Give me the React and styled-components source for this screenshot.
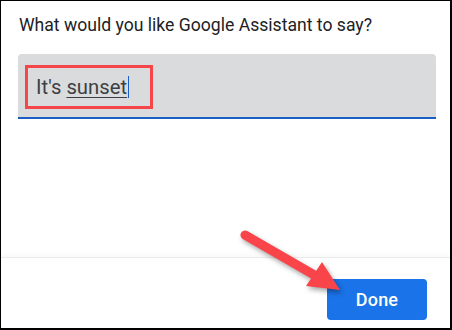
import React from "react";
import styled, { createGlobalStyle } from "styled-components";

const Global = createGlobalStyle`
  html, body { margin: 0; padding: 0; background: #ffffff; }
  body { font-family: Roboto, "Liberation Sans", Arial, sans-serif; }
`;

const Frame = styled.div`
  position: relative;
  box-sizing: border-box;
  width: 452px;
  height: 330px;
  border-style: solid;
  border-color: #000;
  border-width: 1px 2px 2px 1px;
  background: #fff;
  display: flex;
  flex-direction: column;
  overflow: hidden;
`;

const Body = styled.div`
  flex: 1;
  display: flex;
  flex-direction: column;
  padding: 12px 14px 0 17px;
`;

const Prompt = styled.div`
  font-size: 17.6px;
  line-height: 24px;
  color: #202124;
  margin-left: 1px;
  white-space: nowrap;
`;

const Field = styled.div`
  margin-top: 17px;
  background: #dadbdd;
  border-radius: 4px 4px 0 0;
  border-bottom: 2px solid #1a5fc8;
  display: flex;
  align-items: flex-start;
  padding: 11px 0 0 7px;
  box-sizing: content-box;
  height: 52px;
`;

const Highlight = styled.div`
  box-sizing: border-box;
  width: 128px;
  height: 44px;
  border: 3px solid #f64649;
  padding: 7px 0 0 8px;
`;

const Value = styled.span`
  font-size: 20.3px;
  line-height: 24px;
  color: #3c4043;
  white-space: nowrap;
`;

const Word = styled.span`
  text-decoration: underline;
  text-decoration-thickness: 1px;
  text-underline-offset: 3px;
  text-decoration-color: #3c4043;
`;

const Caret = styled.span`
  display: inline-block;
  width: 1px;
  height: 22px;
  background: #1a5fc8;
  vertical-align: -4px;
  margin-left: 1px;
`;

const Footer = styled.div`
  border-top: 1px solid #ebebeb;
  box-shadow: 0 -3px 5px rgba(0, 0, 0, 0.025);
  display: flex;
  justify-content: flex-end;
  padding: 21px 23px 8px 0;
`;

const DoneButton = styled.button`
  width: 100px;
  height: 41px;
  border: none;
  border-radius: 4px;
  background: #1a73e8;
  color: #fff;
  font-family: Roboto, "Liberation Sans", Arial, sans-serif;
  font-size: 18px;
  font-weight: 500;
  letter-spacing: 0.2px;
  padding: 0;
  cursor: pointer;
`;

const Annotation = styled.svg`
  position: absolute;
  left: -1px;
  top: -1px;
  width: 452px;
  height: 330px;
  pointer-events: none;
  filter: drop-shadow(2px 3px 2.5px rgba(0, 0, 0, 0.35));
`;

export default function App() {
  return (
    <>
      <Global />
      <Frame>
        <Body>
          <Prompt>What would you like Google Assistant to say?</Prompt>
          <Field>
            <Highlight>
              <Value>
                It's <Word>sunset</Word>
                <Caret />
              </Value>
            </Highlight>
          </Field>
        </Body>
        <Footer>
          <DoneButton>Done</DoneButton>
        </Footer>
        <Annotation viewBox="0 0 452 330">
          <line
            x1="245"
            y1="235"
            x2="316"
            y2="276"
            stroke="#f9454a"
            strokeWidth="9"
            strokeLinecap="round"
          />
          <polygon points="322,262 340,290 306,286" fill="#f9454a" />
        </Annotation>
      </Frame>
    </>
  );
}
